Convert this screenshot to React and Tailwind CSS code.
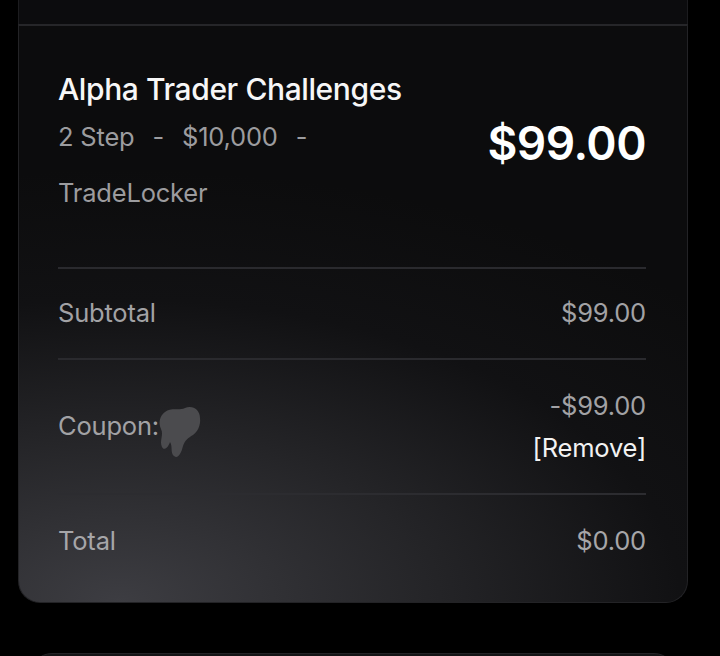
export default function App() {
  return (
    <div className="min-h-[656px] bg-black pl-[18px] pr-[32px] overflow-hidden" style={{ fontFamily: 'Inter, "Noto Sans", sans-serif' }}>
      {/* previous card peeking from above */}
      <div className="h-[24px] bg-[#0c0c0e] border-x border-[#1c1c1f]" />

      {/* Order summary card */}
      <div className="rounded-b-[22px] border border-t-2 border-[#232326] border-t-[#262629] bg-[radial-gradient(ellipse_120%_75%_at_15%_100%,#3d3d42_0%,#242427_40%,#111113_70%,#0c0c0d_100%)] pl-[39px] pr-[41px] pt-[45px] pb-[15px]">
        <div className="flex items-center justify-between pb-[56px] border-b-2 border-[#2a2a2e]">
          <div className="w-[360px]">
            <h2 className="whitespace-nowrap text-[30px] leading-[36px] font-medium text-[#f7f7f7] tracking-[-0.4px]">
              Alpha Trader Challenges
            </h2>
            <div className="mt-[12px] flex flex-wrap gap-x-[18px] gap-y-[20px] text-[25.5px] leading-[36px] text-[#9c9c9f] tracking-[-0.2px]">
              <span>2 Step</span>
              <span>-</span>
              <span>$10,000</span>
              <span>-</span>
              <span>TradeLocker</span>
            </div>
          </div>
          <div className="text-[46px] leading-[56px] font-semibold text-white tracking-[-0.5px] mt-[4px]">$99.00</div>
        </div>

        <div className="flex items-center justify-between h-[91px] border-b-2 border-[#2a2a2e] text-[25.5px] tracking-[-0.2px] text-[#a2a2a5]">
          <span>Subtotal</span>
          <span>$99.00</span>
        </div>

        <div className="flex items-center justify-between h-[135px] border-b-2 border-[#2c2c30] text-[25.5px] tracking-[-0.2px]">
          <div className="flex items-center text-[#a2a2a5]">
            <span>Coupon:</span>
            <svg width="48" height="56" viewBox="0 0 48 56" className="-ml-[4px] mt-[10px]">
              <path
                d="M10 8 C16 3 24 7 30 4 C38 1 45 6 45 14 C46 22 42 28 38 31 C33 34 30 36 28 42 C26 50 23 55 19 52 C15 49 18 42 15 38 C13 44 9 47 7 43 C4 37 9 31 6 25 C3 18 5 12 10 8 Z"
                fill="#4b4b4e"
              />
            </svg>
          </div>
          <div className="flex flex-col items-end gap-[6px] leading-[36px]">
            <span className="text-[#a2a2a5]">-$99.00</span>
            <span className="text-[#f2f2f2]">[Remove]</span>
          </div>
        </div>

        <div className="flex items-center justify-between h-[92px] text-[25.5px] tracking-[-0.2px] text-[#a6a6a9]">
          <span>Total</span>
          <span>$0.00</span>
        </div>
      </div>

      {/* next card peeking from below */}
      <div className="mt-[50px] mx-[12px] h-[30px] rounded-t-[22px] bg-[#141416] border border-[#232326]" />
    </div>
  );
}
